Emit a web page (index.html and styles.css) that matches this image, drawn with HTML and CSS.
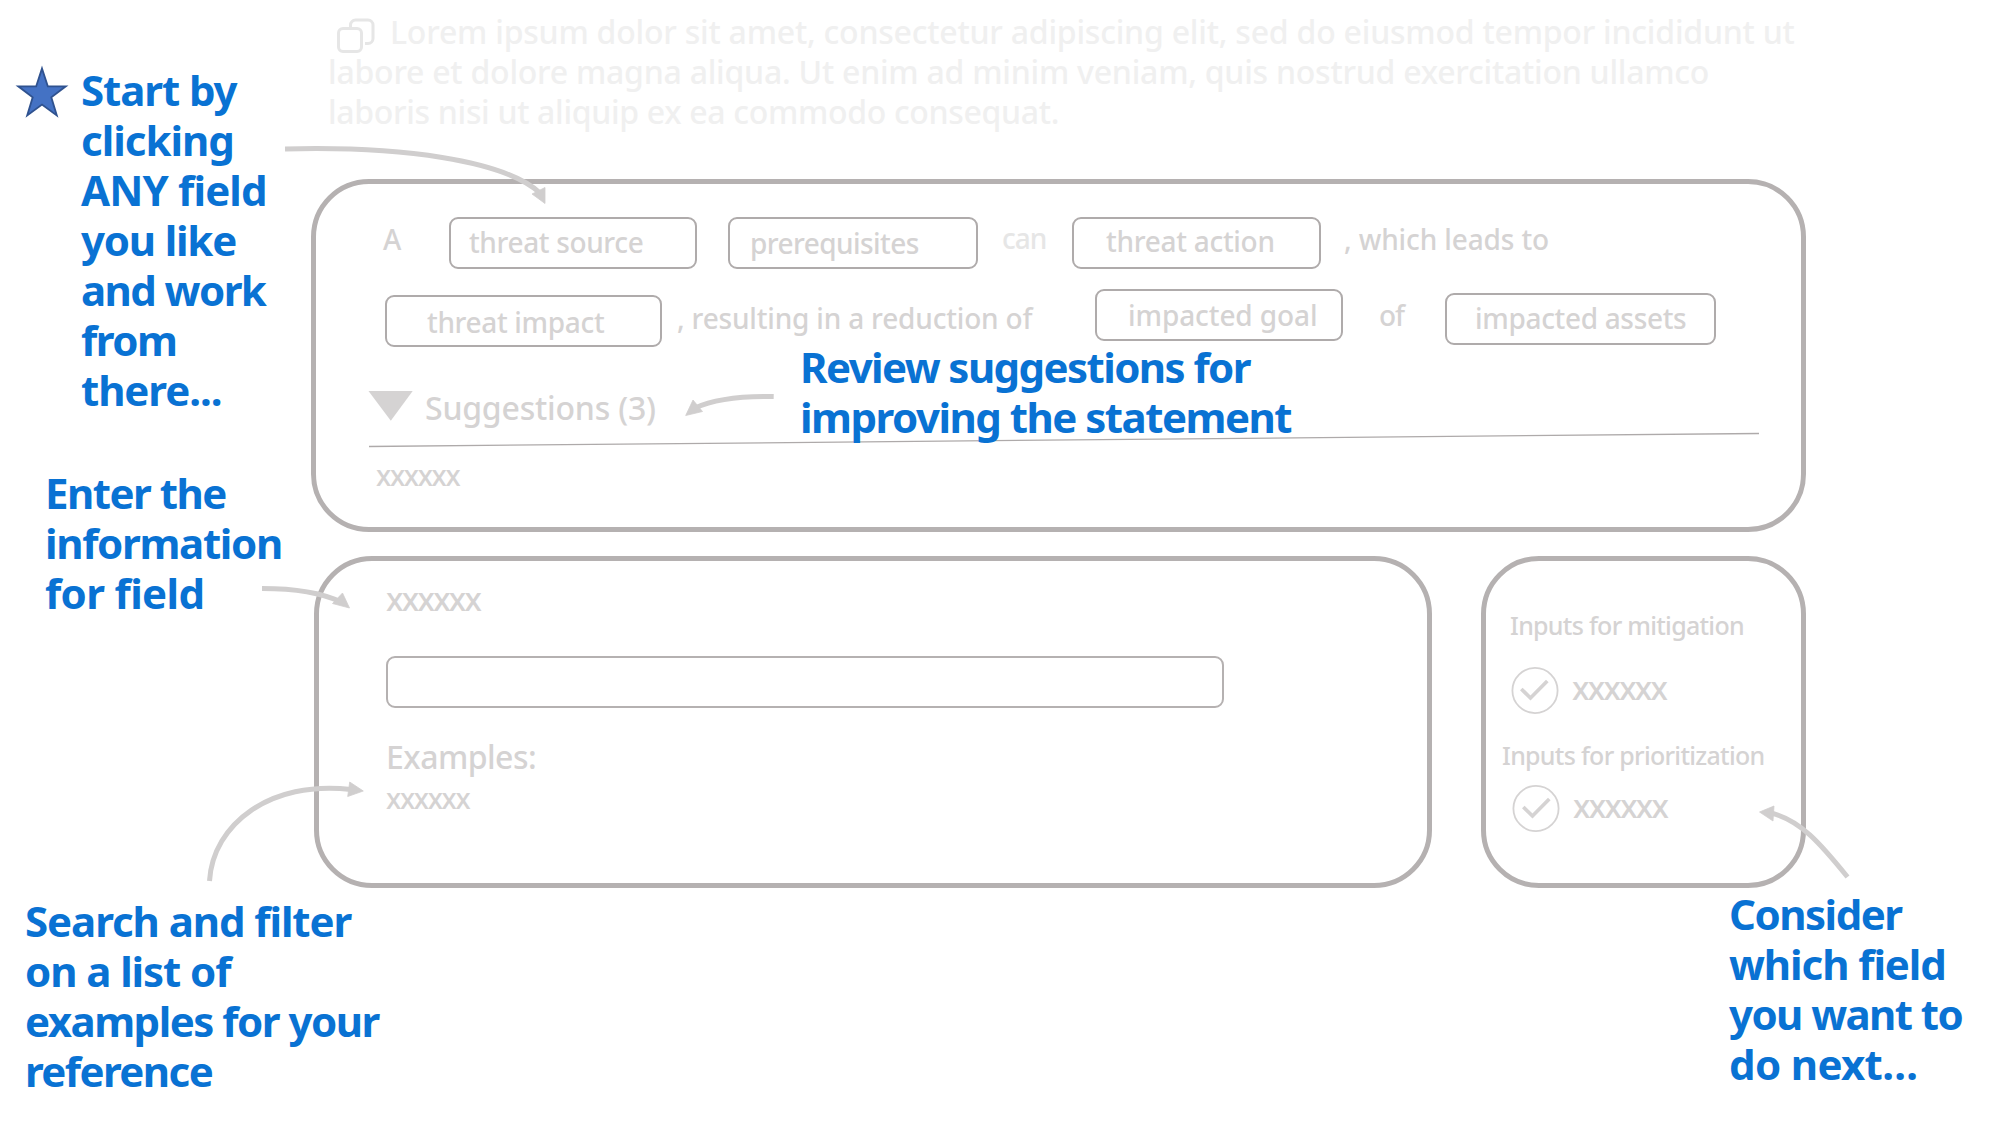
FILE: index.html
```html
<!DOCTYPE html>
<html lang="en">
<head>
<meta charset="utf-8">
<title>Threat statement composer guide</title>
<link rel="stylesheet" href="styles.css">
</head>
<body>
<main class="board">
  <header class="statement">
    <span class="t l1"><svg class="copy" width="44" height="40" viewBox="0 0 44 40"><path d="M13.500 12V8a5 5 0 0 1 5-5h12.500a5 5 0 0 1 5 5v13.500a5 5 0 0 1-5 5H28"/><rect x="1.500" y="11.500" width="23" height="23" rx="4.500"/></svg>Lorem ipsum dolor sit amet, consectetur adipiscing elit, sed do eiusmod tempor incididunt ut</span>
    <span class="t l2">labore et dolore magna aliqua. Ut enim ad minim veniam, quis nostrud exercitation ullamco</span>
    <span class="t l3">laboris nisi ut aliquip ex ea commodo consequat.</span>
  </header>

  <section class="panel composer">
    <div class="row first">
      <span class="word a">A</span>
      <div class="field source">threat source</div>
      <div class="field prereq">prerequisites</div>
      <span class="word can">can</span>
      <div class="field action">threat action</div>
      <span class="word leads">, which leads to</span>
    </div>
    <div class="row second">
      <div class="field impact">threat impact</div>
      <span class="word resulting">, resulting in a reduction of</span>
      <div class="field goal">impacted goal</div>
      <span class="word of">of</span>
      <div class="field assets">impacted assets</div>
    </div>
    <div class="suggestions">
      <svg width="45" height="30" viewBox="0 0 45 30"><path d="M0.500 0H44.700L22.800 29.800Z" fill="#d5d3d3"/></svg>
      <span>Suggestions (3)</span>
    </div>
    <svg class="divider" width="1392" height="16" viewBox="0 0 1392 16"><path d="M1 14.500L1391 1.500" stroke="#aeaaaa" stroke-width="1.300"/></svg>
    <div class="small x1">xxxxxx</div>
  </section>

  <div class="lower">
    <section class="panel editor">
      <div class="large">xxxxxx</div>
      <div class="input"></div>
      <div class="large examples">Examples:</div>
      <div class="small">xxxxxx</div>
    </section>
    <section class="panel inputs">
      <div class="label mitigation">Inputs for mitigation</div>
      <div class="check c1"><svg width="50" height="48" viewBox="0 0 50 48"><circle cx="24" cy="23.500" r="22.600"/><path d="M10.300 22L19.500 31L36.300 14"/></svg><span class="large">xxxxxx</span></div>
      <div class="label prioritization">Inputs for prioritization</div>
      <div class="check c2"><svg width="50" height="48" viewBox="0 0 50 48"><circle cx="24" cy="23.500" r="22.600"/><path d="M11.300 22L20.500 31L37.300 14"/></svg><span class="large">xxxxxx</span></div>
    </section>
  </div>

  <svg class="overlay" width="2008" height="1122" viewBox="0 0 2008 1122">
    <path class="star" d="M42 68.500L47.800 86.300H65.800L51.300 97.300L56.800 115.500L42 104.500L27.200 115.500L32.700 97.300L18.200 86.300H36.200Z"/>
    <g class="lines">
      <path d="M285 149C400 146 504 160 540 193"/>
      <path d="M773.700 396.500C743 396 714 399 695 408"/>
      <path d="M262 588.500C292 588.500 322 593 341 602"/>
      <path d="M209.500 881C213 824 270 780 351 789.500"/>
      <path d="M1847.500 877C1820 843 1800 820 1771 813"/>
    </g>
    <g class="heads">
      <path d="M545 187.500V203.500L532 194Z"/>
      <path d="M685.700 415.500L693 400L702.500 411.500Z"/>
      <path d="M349.500 608L342.500 593L332.500 603.500Z"/>
      <path d="M363.300 791L349.700 782L347.700 796.500Z"/>
      <path d="M1759.500 812L1774 806L1773 821Z"/>
    </g>
  </svg>

  <p class="callout start"><span class="s10">Start by</span><span class="s9">clicking</span><span class="s8">ANY field</span><span class="s12">you like</span><span class="s16">and work</span><span class="s14">from</span><span class="s10">there...</span></p>
  <p class="callout enter"><span class="s15">Enter the</span><span class="s13">information</span><span class="s6">for field</span></p>
  <p class="callout review"><span class="s16">Review suggestions for</span><span class="s15">improving the statement</span></p>
  <p class="callout search"><span class="s10">Search and filter</span><span class="s10">on a list of</span><span class="s15">examples for your</span><span class="s16">reference</span></p>
  <p class="callout consider"><span class="s15">Consider</span><span class="s10">which field</span><span class="s16">you want to</span><span class="s6">do next…</span></p>
</main>
</body>
</html>
```
FILE: styles.css
```css
* { box-sizing: border-box; }
body {
  margin: 0;
  background: #fff;
  font-family: "Noto Sans", "Open Sans", sans-serif;
  font-weight: 500;
  color: #d5d3d3;
}
svg { display: block; flex: none; }
.board {
  position: relative;
  width: 2008px;
  height: 1122px;
  padding: 12px 202px 0 311px;
  overflow: hidden;
}

/* rendered statement */
.statement {
  height: 167px;
  padding-left: 17px;
  font-size: 32px;
  line-height: 40px;
  color: #f0f0f0;
}
.t { display: flex; height: 40px; white-space: nowrap; }
.l1 { letter-spacing: -0.22px; padding-left: 9px; }
.l2 { letter-spacing: -0.24px; }
.l3 { letter-spacing: -0.32px; }
.copy {
  margin: 5px 9px 0 0;
  fill: none;
  stroke: #e6e6e6;
  stroke-width: 3;
}

/* panels */
.panel {
  border: 5px solid #b5b1b1;
  border-radius: 58px;
}
.composer {
  height: 353px;
  padding-top: 33px;
  display: flex;
  flex-direction: column;
  align-items: flex-start;
}
.row {
  display: flex;
  align-items: flex-start;
  font-size: 28px;
  line-height: 40px;
  white-space: nowrap;
}
.first { height: 72px; padding-left: 66px; }
.second { height: 99px; padding-left: 69px; }
.field {
  flex: none;
  height: 52px;
  border: 2px solid #afabab;
  border-radius: 9px;
}
.word { flex: none; }
.a { width: 67px; margin-top: 2px; padding-left: 1px; }
.source { width: 248px; padding: 3px 0 0 18px; letter-spacing: -0.36px; }
.prereq { width: 250px; margin-left: 31px; padding: 4px 0 0 20px; letter-spacing: -0.57px; }
.can { width: 94px; margin-top: 1px; padding-left: 24px; letter-spacing: -1px; color: #e6e6e6; }
.action { width: 249px; padding: 2px 0 0 32px; letter-spacing: -0.28px; }
.leads { margin-top: 2px; padding-left: 23px; letter-spacing: -0.12px; }
.impact { width: 277px; margin-top: 6px; padding: 5px 0 0 40px; letter-spacing: -0.33px; }
.resulting { width: 433px; margin-top: 9px; padding-left: 15px; letter-spacing: -0.18px; }
.goal { width: 248px; padding: 4px 0 0 31px; letter-spacing: -0.09px; }
.of { width: 102px; margin-top: 6px; padding-left: 36px; letter-spacing: -1px; }
.assets { width: 271px; margin-top: 4px; padding: 3px 0 0 28px; letter-spacing: -0.33px; }
.suggestions {
  display: flex;
  align-items: flex-start;
  gap: 12px;
  height: 44px;
  padding-left: 52px;
  font-size: 32px;
  line-height: 40px;
  letter-spacing: -0.21px;
}
.suggestions svg { margin-top: 3px; }
.divider { margin-left: 52px; }
.small { font-size: 28px; line-height: 40px; letter-spacing: -1.3px; }
.large { font-size: 32px; line-height: 40px; letter-spacing: -1.66px; }
.x1 { margin: 7px 0 0 60px; }

.lower {
  display: flex;
  gap: 49px;
  margin: 24px 0 0 3px;
}
.editor { width: 1118px; height: 332px; padding: 18px 0 0 67px; }
.input {
  width: 838px;
  height: 52px;
  margin-top: 37px;
  border: 2px solid #b5b1b1;
  border-radius: 9px;
}
.editor .examples { margin-top: 29px; letter-spacing: -0.53px; }
.editor .small { margin-top: 1px; }
.inputs { width: 325px; height: 332px; padding-top: 44px; }
.label { font-size: 25px; line-height: 40px; letter-spacing: -0.72px; }
.mitigation { padding-left: 24px; }
.prioritization { margin-top: 20px; padding-left: 16px; }
.check { display: flex; height: 48px; gap: 11px; padding-left: 25px; }
.check span { margin-top: 1px; }
.c1 { margin-top: 22px; }
.c2 { margin-top: 10px; padding-left: 26px; }
.check svg { fill: none; stroke: #d5d3d3; stroke-width: 1.8; }
.check path { stroke-width: 3.7; }

/* annotations */
.overlay { position: absolute; left: 0; top: 0; }
.star { fill: #4472c4; stroke: #2f528f; stroke-width: 1.8; }
.lines { fill: none; stroke: #d0cece; stroke-width: 5; }
.heads { fill: #d0cece; stroke: #d0cece; stroke-width: .8; }
.callout {
  position: absolute;
  margin: 0;
  font-size: 42px;
  line-height: 50px;
  font-weight: 700;
  color: #0972d3;
  white-space: nowrap;
}
.callout span { display: block; }
.start { left: 81px; top: 65px; }
.enter { left: 45px; top: 468px; }
.review { left: 800px; top: 342px; }
.search { left: 25px; top: 896px; }
.consider { left: 1729px; top: 889px; }
.s6 { letter-spacing: -0.65px; }
.s8 { letter-spacing: -0.85px; }
.s9 { letter-spacing: -1px; }
.s10 { letter-spacing: -1.08px; }
.s12 { letter-spacing: -1.2px; }
.s13 { letter-spacing: -1.33px; }
.s14 { letter-spacing: -1.48px; }
.s15 { letter-spacing: -1.5px; }
.s16 { letter-spacing: -1.58px; }
```
